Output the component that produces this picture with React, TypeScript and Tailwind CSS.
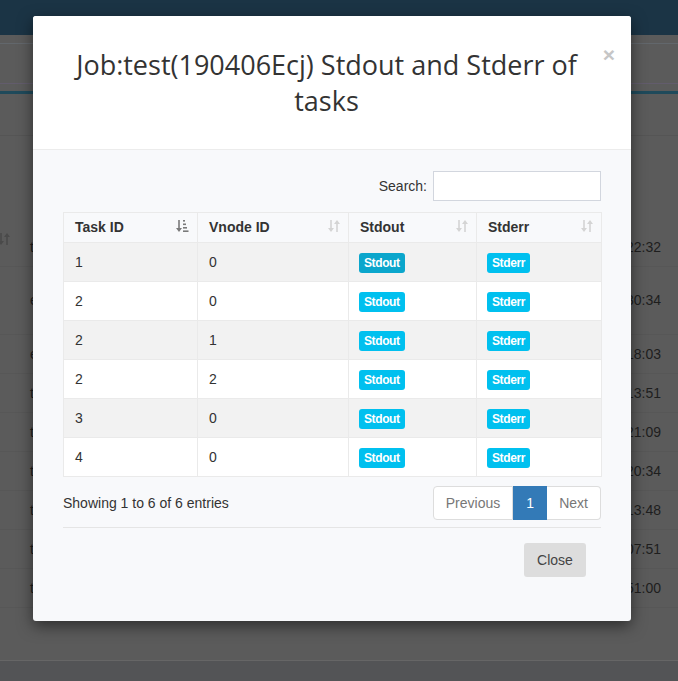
const rows = [
  { task: '1', vnode: '0' },
  { task: '2', vnode: '0' },
  { task: '2', vnode: '1' },
  { task: '2', vnode: '2' },
  { task: '3', vnode: '0' },
  { task: '4', vnode: '0' },
];

const bgRows = [
  { left: 't', time: '12:22:32', h: 'h-[38px]' },
  { left: 'e', time: '12:30:34', h: 'h-[68px]' },
  { left: 'e', time: '12:18:03', h: 'h-[39px]' },
  { left: 't', time: '12:13:51', h: 'h-[39px]' },
  { left: 't', time: '12:21:09', h: 'h-[39px]' },
  { left: 't', time: '12:20:34', h: 'h-[39px]' },
  { left: 't', time: '12:13:48', h: 'h-[39px]' },
  { left: 't', time: '12:07:51', h: 'h-[39px]' },
  { left: 't', time: '12:51:00', h: 'h-[39px]' },
];

function SortBoth() {
  return (
    <svg width="12" height="14" viewBox="0 0 12 14" className="text-[#d4d4d4]">
      <rect x="2.2" y="1" width="1.6" height="9" fill="currentColor" />
      <polygon points="0,9 6,9 3,13" fill="currentColor" />
      <rect x="8.2" y="4" width="1.6" height="9" fill="currentColor" />
      <polygon points="6,5 12,5 9,1" fill="currentColor" />
    </svg>
  );
}

function SortAsc() {
  return (
    <svg width="13" height="14" viewBox="0 0 13 14" className="text-[#7a7a7a]">
      <rect x="2.2" y="1" width="1.6" height="9" fill="currentColor" />
      <polygon points="0,9 6,9 3,13" fill="currentColor" />
      <rect x="7" y="1" width="2" height="1.6" fill="currentColor" />
      <rect x="7" y="4.5" width="3" height="1.6" fill="currentColor" />
      <rect x="7" y="8" width="4" height="1.6" fill="currentColor" />
      <rect x="7" y="11.4" width="5.5" height="1.6" fill="currentColor" />
    </svg>
  );
}

function Background() {
  return (
    <div className="w-[678px] h-[681px] bg-[#5b5b5b] flex flex-col font-['Liberation_Sans',Arial,sans-serif] text-[14px] text-[#1e1e1e] overflow-hidden">
      <div className="h-[35px] bg-[#1b3445] shrink-0" />
      <div className="h-[8px] shrink-0" />
      <div className="h-px bg-[#62676c] shrink-0" />
      <div className="h-[39px] shrink-0" />
      <div className="h-px bg-[#625c6c] shrink-0" />
      <div className="h-[7px] shrink-0" />
      <div className="h-[3px] bg-[#1f4a5b] shrink-0" />
      <div className="h-[41px] shrink-0" />
      <div className="h-px bg-[#555555] shrink-0" />
      <div className="h-[93px] shrink-0" />
      {bgRows.map((r, i) => (
        <div key={i} className={`${r.h} shrink-0 flex items-center border-b border-[#575757]`}>
          <div className="w-[30px] self-start pt-[3px]">
            {i === 0 && (
              <svg width="12" height="14" viewBox="0 0 12 14" className="text-[#4a4a4a] -ml-[2px]">
                <rect x="2.2" y="1" width="1.6" height="9" fill="currentColor" />
                <polygon points="0,9 6,9 3,13" fill="currentColor" />
                <rect x="8.2" y="4" width="1.6" height="9" fill="currentColor" />
                <polygon points="6,5 12,5 9,1" fill="currentColor" />
              </svg>
            )}
          </div>
          <span className="flex-1">{r.left}</span>
          <span className="pr-[17px]">{r.time}</span>
        </div>
      ))}
      <div className="flex-1" />
      <div className="h-px bg-[#666666] shrink-0" />
      <div className="h-[20px] bg-[#535456] shrink-0" />
    </div>
  );
}

export default function App() {
  return (
    <div className="relative w-[678px] h-[681px]">
      <Background />
      <div className="absolute left-[33px] top-[16px] w-[598px] h-[605px] bg-[#f8f9fb] rounded-[3px] shadow-[0_5px_15px_rgba(0,0,0,0.5)] flex flex-col font-['Liberation_Sans',Arial,sans-serif] text-[14px] text-[#333]">
        <div className="relative bg-white rounded-t-[3px] border-b border-[#ececec] pt-[31px] pb-[30px] pl-[30px] pr-[41px]">
          <h4 className="text-center font-['Open_Sans',sans-serif] text-[27px] leading-[36px] text-[#333]">
            Job:test(190406Ecj) Stdout and Stderr of tasks
          </h4>
          <button className="absolute right-[16px] top-[28px] text-[21px] font-bold leading-none text-[#c6c6c6] font-['Liberation_Sans',Arial,sans-serif]">
            ×
          </button>
        </div>

        <div className="px-[30px] pt-[21px] flex flex-col">
          <div className="flex items-center justify-end gap-[6px]">
            <label>Search:</label>
            <input className="w-[168px] h-[30px] bg-white border border-[#d2d6de] outline-none" />
          </div>

          <table className="mt-[11px] w-[538px] border-collapse table-fixed">
            <thead>
              <tr className="h-[30px]">
                {[
                  { name: 'Task ID', w: 'w-[134px]', asc: true },
                  { name: 'Vnode ID', w: 'w-[151px]', asc: false },
                  { name: 'Stdout', w: 'w-[128px]', asc: false },
                  { name: 'Stderr', w: 'w-[125px]', asc: false },
                ].map(h => (
                  <th key={h.name} className={`${h.w} border border-[#eaeaea] pl-[11px] pr-[8px] text-left font-bold`}>
                    <div className="flex items-center justify-between">
                      <span>{h.name}</span>
                      <span className="-mt-[4px]">{h.asc ? <SortAsc /> : <SortBoth />}</span>
                    </div>
                  </th>
                ))}
              </tr>
            </thead>
            <tbody>
              {rows.map((r, i) => (
                <tr key={i} className={`h-[39px] ${i % 2 === 0 ? 'bg-[#f2f2f2]' : 'bg-white'}`}>
                  <td className="border border-[#eaeaea] pl-[11px]">{r.task}</td>
                  <td className="border border-[#eaeaea] pl-[11px]">{r.vnode}</td>
                  <td className="border border-[#eaeaea] pl-[10px]">
                    <span className={`inline-block px-[5px] h-[20px] leading-[20px] rounded-[3px] text-white text-[12px] font-bold tracking-[-0.4px] ${i === 0 ? 'bg-[#0ba6cc]' : 'bg-[#00c0ef]'}`}>
                      Stdout
                    </span>
                  </td>
                  <td className="border border-[#eaeaea] pl-[10px]">
                    <span className="inline-block px-[5px] h-[20px] leading-[20px] rounded-[3px] text-white text-[12px] font-bold tracking-[-0.4px] bg-[#00c0ef]">
                      Stderr
                    </span>
                  </td>
                </tr>
              ))}
            </tbody>
          </table>

          <div className="mt-[9px] flex items-center justify-between">
            <div>Showing 1 to 6 of 6 entries</div>
            <div className="flex h-[34px]">
              <span className="px-[12px] flex items-center border border-[#dddddd] rounded-l-[4px] bg-white text-[#777]">Previous</span>
              <span className="w-[34px] flex items-center justify-center bg-[#337ab7] border border-[#337ab7] text-white">1</span>
              <span className="px-[12px] flex items-center border border-[#dddddd] border-l-0 rounded-r-[4px] bg-white text-[#777]">Next</span>
            </div>
          </div>

          <div className="mt-[7px] border-t border-[#e5e5e5] pt-[15px] pr-[15px] flex justify-end">
            <button className="w-[62px] h-[34px] bg-[#dddddd] text-[#444] rounded-[3px]">Close</button>
          </div>
        </div>
      </div>
    </div>
  );
}
